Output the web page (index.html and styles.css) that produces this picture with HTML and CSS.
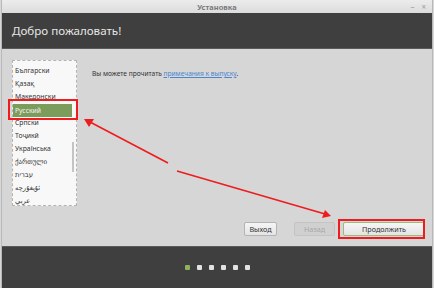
FILE: index.html
```html
<!DOCTYPE html>
<html>
<head>
<meta charset="UTF-8">
<title>Установка</title>
<link rel="stylesheet" href="styles.css">
</head>
<body>
<div class="window">
	<div class="titlebar">
		<span class="title">Установка</span>
		<span class="controls"><span>–</span><span>×</span></span>
	</div>
	<div class="header">Добро пожаловать!</div>
	<div class="content">
		<div class="main">
			<div class="langlist">
				<div class="items">
					<div class="item">Български</div>
					<div class="item">Қазақ</div>
					<div class="item">Македонски</div>
					<div class="item selected">Русский</div>
					<div class="item">Српски</div>
					<div class="item">Тоҷикӣ</div>
					<div class="item">Українська</div>
					<div class="item">ქართული</div>
					<div class="item">עברית</div>
					<div class="item">ئۇيغۇرچە</div>
					<div class="item">عربي</div>
				</div>
				<div class="scroll"><div class="thumb"></div></div>
			</div>
			<div class="notes">Вы можете прочитать <a href="#">примечания к выпуску</a>.</div>
		</div>
		<div class="buttons">
			<input type="button" class="button" value="Выход">
			<input type="button" class="button disabled" value="Назад">
			<input type="button" class="button primary" value="Продолжить">
		</div>
	</div>
	<div class="footer">
		<span class="dot active"></span><span class="dot"></span><span class="dot"></span><span class="dot"></span><span class="dot"></span><span class="dot"></span>
	</div>
</div>

<!-- red annotation marks over the screenshot -->
<svg class="marks" width="434" height="288" viewBox="0 0 434 288">
	<rect x="9" y="100" width="68" height="19" fill="none" stroke="#ee1c1c" stroke-width="2"/>
	<rect x="339" y="220" width="85" height="18" fill="none" stroke="#ee1c1c" stroke-width="2"/>
	<line x1="168" y1="163" x2="90" y2="122" stroke="#ee1c1c" stroke-width="1.6"/>
	<polygon points="84,119 94,119 89,127" fill="#ee1c1c"/>
	<line x1="177" y1="171" x2="325" y2="214" stroke="#ee1c1c" stroke-width="1.6"/>
	<polygon points="331,216 322,218 325,210" fill="#ee1c1c"/>
</svg>
</body>
</html>
```

FILE: styles.css
```css
body {
  margin: 0;
  background-color: #d8d8d8;
  font-family: "Noto Sans", "DejaVu Sans", sans-serif;
}

.window {
  width: 430px;
  height: 288px;
  margin-left: 1px;
  display: flex;
  flex-direction: column;
  border-left: 1px solid #b8b8b8;
  border-right: 1px solid #b8b8b8;
}

.titlebar {
  height: 13px;
  background: linear-gradient(#ececec, #dcdcdc);
  display: flex;
  align-items: center;
  justify-content: center;
  position: relative;
}

.title {
  font-size: 7.5px;
  font-weight: bold;
  color: #7a7a7a;
}

.controls {
  position: absolute;
  right: 6px;
  top: 1px;
  font-size: 8px;
  color: #a0a0a0;
  display: flex;
  gap: 7px;
}

.header {
  height: 35px;
  background-color: #3f3f3f;
  color: #e6e6e6;
  font-size: 11.6px;
  padding-left: 10px;
  display: flex;
  align-items: center;
  border-bottom: 1px solid #5a5a5a;
}

.content {
  flex: 1;
  background-color: #d6d6d6;
  padding: 11px 7px 10px 10px;
  display: flex;
  flex-direction: column;
}

.main {
  display: flex;
  gap: 15px;
}

.langlist {
  width: 63px;
  height: 144px;
  background-color: #f8f8f8;
  border: 1px dashed #b4b4b4;
  display: flex;
  font-size: 6.8px;
  color: #333;
}

.items {
  flex: 1;
  padding-top: 3px;
}

.item {
  height: 13px;
  line-height: 13px;
  padding-left: 2px;
  white-space: nowrap;
  overflow: hidden;
}

.selected {
  background-color: #7c9c5c;
  color: #f4f4f4;
  margin-top: 1px;
  margin-bottom: -1px;
}

.scroll {
  width: 4px;
  padding-top: 81px;
}

.thumb {
  width: 2px;
  height: 30px;
  background-color: #c4c4c4;
}

.notes {
  font-size: 6.6px;
  color: #333;
  margin-top: 9px;
}

.notes a {
  color: #4a86cf;
}

.buttons {
  margin-top: auto;
  display: flex;
  justify-content: flex-end;
  align-items: center;
}

.button {
  height: 14px;
  padding: 0;
  font-family: "Noto Sans", "DejaVu Sans", sans-serif;
  font-size: 7.2px;
  color: #333;
  background: linear-gradient(#f6f6f6, #e4e4e4);
  border: 1px solid #b4b4b4;
  border-radius: 2px;
  width: 33px;
}

.disabled {
  width: 41px;
  margin-left: 17px;
  color: #a8a8a8;
  background: #d0d0d0;
  border-color: #c4c4c4;
}

.primary {
  width: 82px;
  margin-left: 8px;
  border-color: #9cba7c;
}

.footer {
  height: 41px;
  background-color: #3f3f3f;
  border-top: 1px solid #5a5a5a;
  display: flex;
  justify-content: center;
  align-items: center;
  gap: 7px;
  padding-left: 1px;
}

.dot {
  width: 5px;
  height: 5px;
  border-radius: 1px;
  background-color: #e2e2e2;
}

.active {
  background-color: #8db15e;
}

.marks {
  position: absolute;
  left: 0;
  top: 0;
  pointer-events: none;
}
```
